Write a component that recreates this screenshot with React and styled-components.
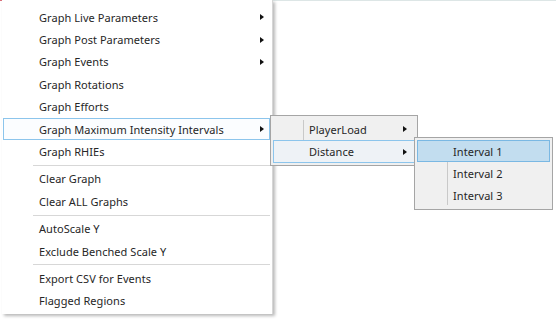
import React from "react";
import styled, { createGlobalStyle, css } from "styled-components";

const GlobalStyle = createGlobalStyle`
  html, body { margin: 0; padding: 0; background: #ffffff; }
  body { font-family: "Noto Sans", "Open Sans", sans-serif; }
`;

const Stage = styled.div`
  position: relative;
  width: 556px;
  height: 321px;
  overflow: hidden;
  background: #ffffff;
`;

const BackStrip = styled.div`
  position: absolute;
  left: 0;
  top: 0;
  width: 556px;
  height: 1px;
  background: linear-gradient(to right, #d9707a 0 46px, #dde6e6 46px 100%);
`;

const Menu = styled.div`
  position: absolute;
  left: ${(p) => p.$left}px;
  top: ${(p) => p.$top}px;
  width: ${(p) => p.$width}px;
  box-sizing: border-box;
  display: flex;
  flex-direction: column;
  ${(p) =>
    p.$main
      ? css`
          background: #ffffff;
          padding: 6px 2px 2px 1px;
          border-right: 1px solid #d6d6d6;
          box-shadow: 2px 2px 3px rgba(0, 0, 0, 0.28);
        `
      : css`
          background: #f0f0f0;
          border: 1px solid #a5a5a5;
          padding: 2px;
          &::before {
            content: "";
            position: absolute;
            left: 32px;
            top: 4px;
            bottom: 4px;
            width: 1px;
            background: #c9c9c9;
          }
        `}
`;

const Item = styled.div`
  position: relative;
  box-sizing: border-box;
  height: 22.4px;
  display: flex;
  align-items: center;
  justify-content: space-between;
  padding: 0 ${(p) => (p.$main ? 5 : 7)}px 0 35px;
  font-size: 11px;
  letter-spacing: 0.05px;
  color: #262626;
  white-space: nowrap;
  border: 1px solid transparent;
  ${(p) =>
    p.$active === "outline" &&
    css`
      border-color: #8cc5ec;
      background: ${p.$main ? "#fbfdff" : "#eef2f6"};
    `}
  ${(p) =>
    p.$active === "fill" &&
    css`
      border-color: #7ab8e3;
      background: #c2ddef;
    `}
`;

const Label = styled.span`
  line-height: 1;
`;

const Arrow = styled.span`
  width: 0;
  height: 0;
  border-top: 3.5px solid transparent;
  border-bottom: 3.5px solid transparent;
  border-left: 4px solid #111111;
`;

const Separator = styled.div`
  height: 5px;
  display: flex;
  align-items: center;
  padding-left: 30px;
  &::after {
    content: "";
    flex: 1;
    height: 1px;
    background: #d7d7d7;
  }
`;

const mainItems = [
  { label: "Graph Live Parameters", sub: true },
  { label: "Graph Post Parameters", sub: true },
  { label: "Graph Events", sub: true },
  { label: "Graph Rotations" },
  { label: "Graph Efforts" },
  { label: "Graph Maximum Intensity Intervals", sub: true, active: "outline" },
  { label: "Graph RHIEs" },
  "sep",
  { label: "Clear Graph" },
  { label: "Clear ALL Graphs" },
  "sep",
  { label: "AutoScale Y" },
  { label: "Exclude Benched Scale Y" },
  "sep",
  { label: "Export CSV for Events" },
  { label: "Flagged Regions" },
];

const sub1 = [
  { label: "PlayerLoad", sub: true },
  { label: "Distance", sub: true, active: "outline" },
];

const sub2 = [
  { label: "Interval 1", active: "fill" },
  { label: "Interval 2" },
  { label: "Interval 3" },
];

function MenuList({ items, main }) {
  return items.map((it, i) =>
    it === "sep" ? (
      <Separator key={i} />
    ) : (
      <Item key={i} $main={main} $active={it.active}>
        <Label>{it.label}</Label>
        {it.sub && <Arrow />}
      </Item>
    )
  );
}

export default function App() {
  return (
    <Stage>
      <GlobalStyle />
      <BackStrip />
      <Menu $main $left={2} $top={0} $width={271}>
        <MenuList items={mainItems} main />
      </Menu>
      <Menu $left={270} $top={115} $width={148}>
        <MenuList items={sub1} />
      </Menu>
      <Menu $left={414} $top={137} $width={139}>
        <MenuList items={sub2} />
      </Menu>
    </Stage>
  );
}
